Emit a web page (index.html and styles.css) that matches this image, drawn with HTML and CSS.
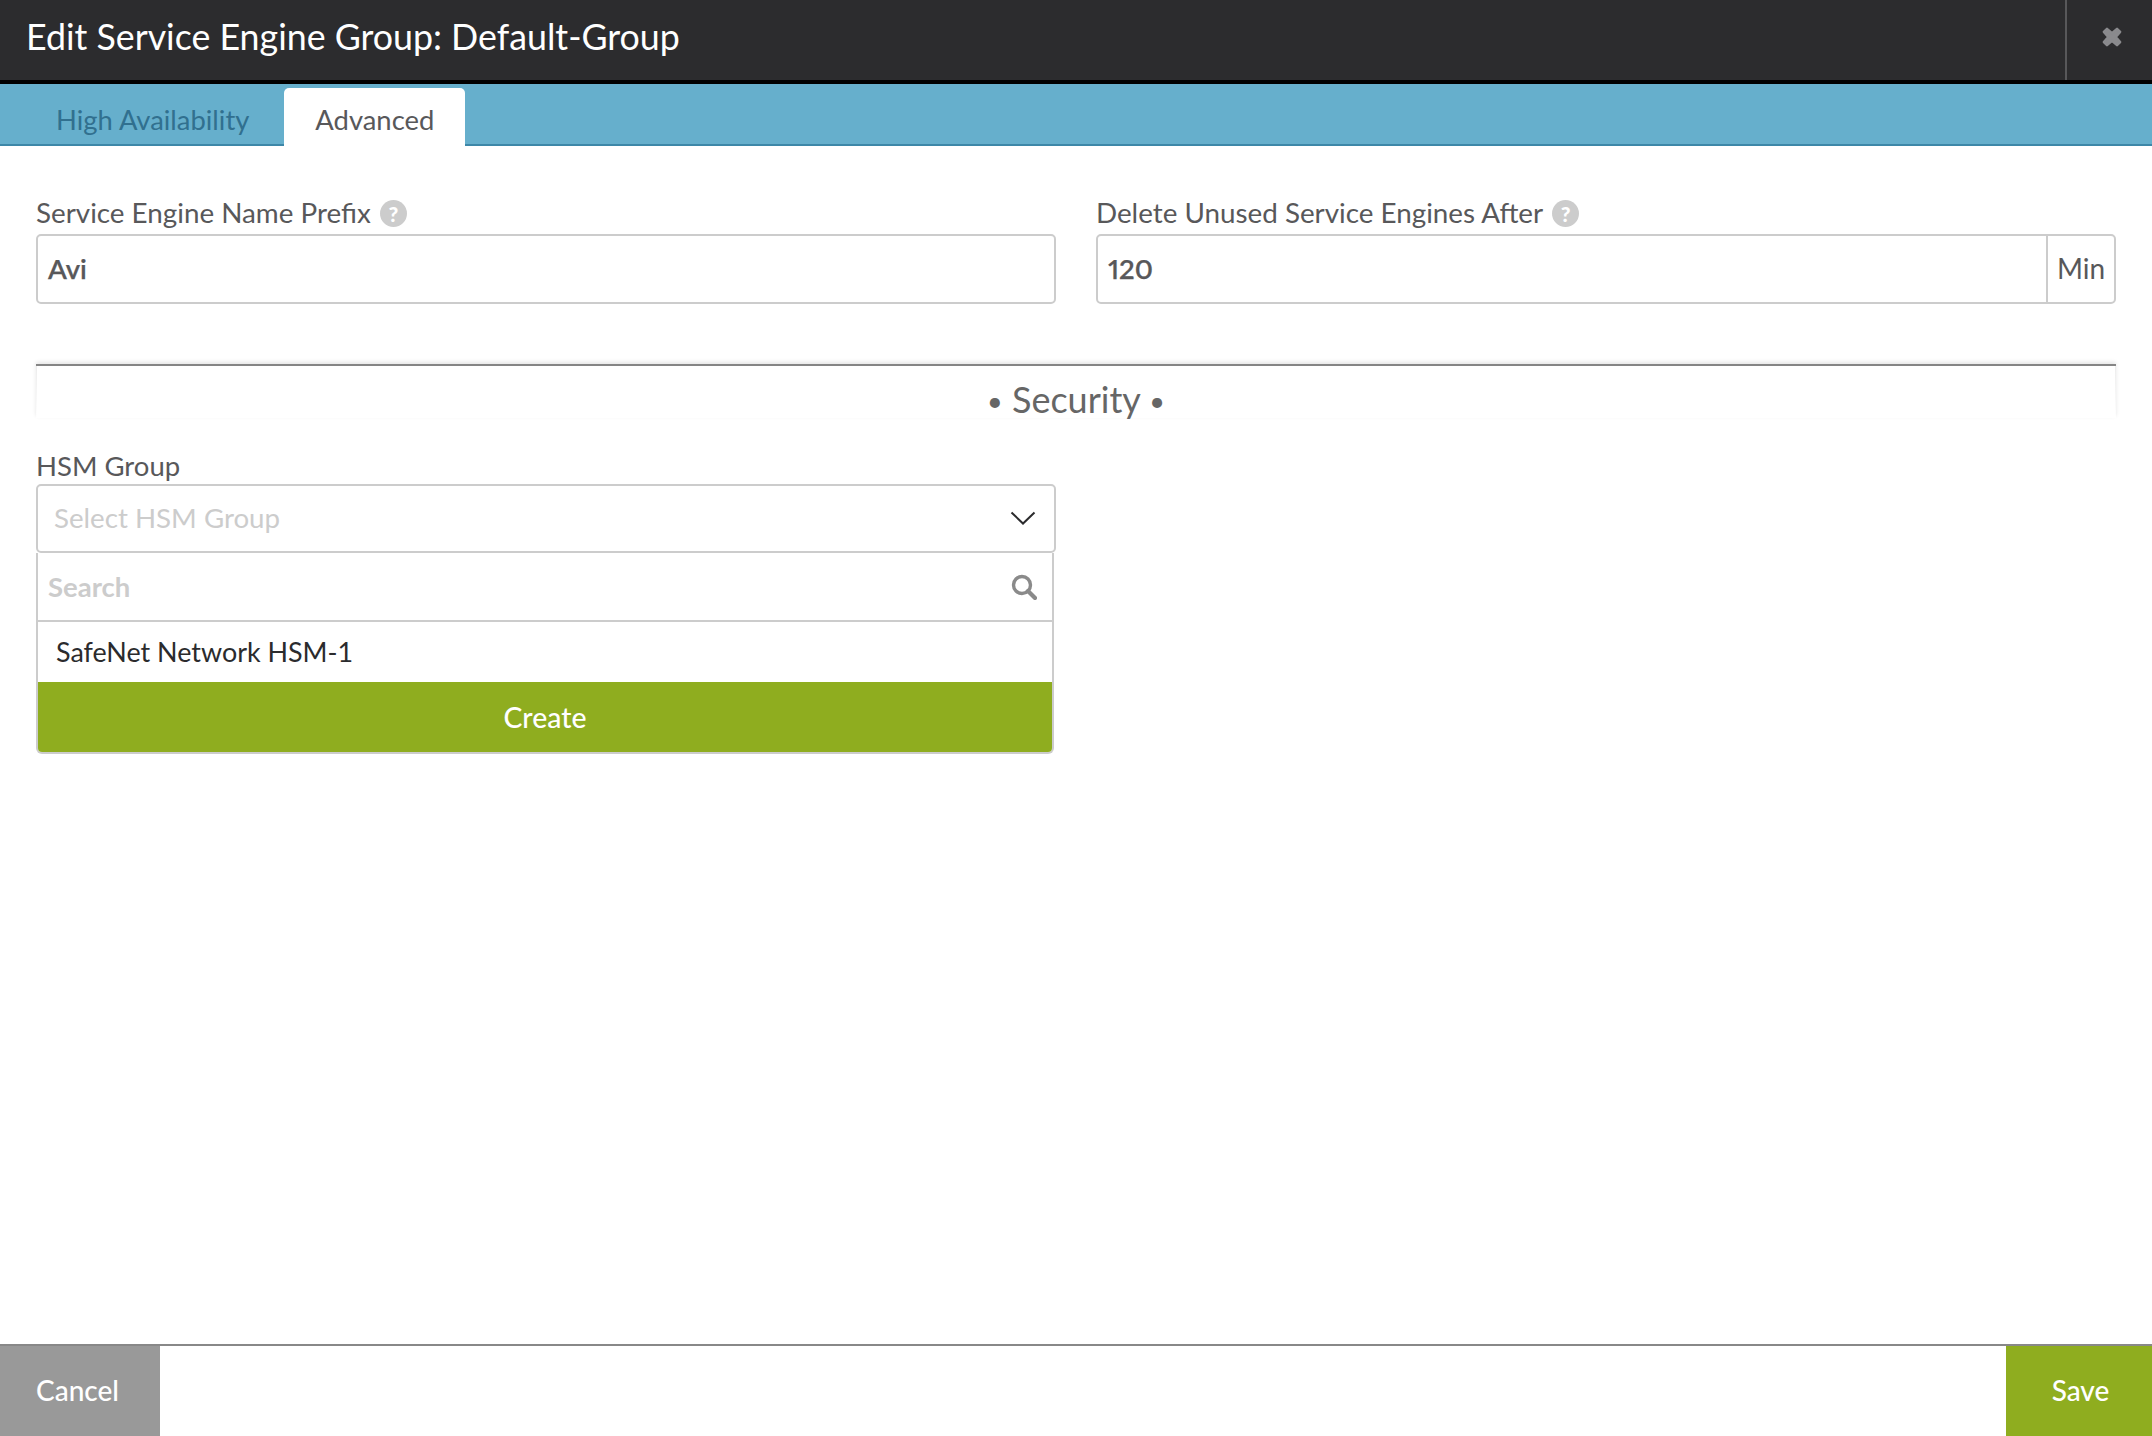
FILE: index.html
```html
<!DOCTYPE html>
<html lang="en">
<head>
<meta charset="utf-8">
<title>Edit Service Engine Group</title>
<link rel="stylesheet" href="styles.css">
</head>
<body>
<div class="modal">
  <header class="header">
    <h1 class="title">Edit Service Engine Group: Default-Group</h1>
    <button class="close" aria-label="Close">
      <svg width="20" height="20" viewBox="2 2 16 16"><path d="M3.5 6 L6 3.5 L10 7 L14 3.5 L16.5 6 L13 10 L16.5 14 L14 16.5 L10 13 L6 16.5 L3.5 14 L7 10 Z" fill="#8a8a8d" stroke="#8a8a8d" stroke-width="2" stroke-linejoin="round"/></svg>
    </button>
  </header>
  <nav class="tabs">
    <a class="tab">High Availability</a>
    <a class="tab tab-active">Advanced</a>
  </nav>
  <main class="content">
    <div class="fields">
      <div class="field">
        <label class="label">Service Engine Name Prefix <span class="help">?</span></label>
        <div class="input"><span class="value">Avi</span></div>
      </div>
      <div class="field">
        <label class="label">Delete Unused Service Engines After <span class="help">?</span></label>
        <div class="input"><span class="value value-grow">120</span><span class="unit">Min</span></div>
      </div>
    </div>
    <section class="section">
      <h2 class="section-title"><span class="dot">•</span> Security <span class="dot">•</span></h2>
    </section>
    <div class="hsm">
      <label class="label label-plain">HSM Group</label>
      <div class="select">
        <span class="placeholder">Select HSM Group</span>
        <svg class="chevron" width="26" height="14" viewBox="0 0 26 14"><path d="M1.5 1.5 L13 12.5 L24.5 1.5" fill="none" stroke="#2b2b2d" stroke-width="2"/></svg>
      </div>
      <div class="panel">
        <div class="search">
          <span class="search-text">Search</span>
          <svg width="26" height="26" viewBox="0 0 26 26"><circle cx="11" cy="11" r="8.5" fill="none" stroke="#8a8a8a" stroke-width="3.4"/><path d="M17 17 L24 24" stroke="#8a8a8a" stroke-width="4.2" stroke-linecap="round"/></svg>
        </div>
        <div class="option">SafeNet Network HSM-1</div>
        <div class="create">Create</div>
      </div>
    </div>
  </main>
  <footer class="footer">
    <button class="btn btn-cancel">Cancel</button>
    <button class="btn btn-save">Save</button>
  </footer>
</div>
</body>
</html>
```
FILE: styles.css
```css
* { box-sizing: border-box; }
html, body { margin: 0; height: 100%; overflow: hidden; }
body { font-family: "Lato", "Open Sans", sans-serif; background: #fff; color: #58585a; }
.modal { display: flex; flex-direction: column; height: 1436px; }

.header { height: 84px; flex: none; background: #2c2c2e; border-bottom: 4px solid #000; display: flex; align-items: center; justify-content: space-between; }
.title { margin: 0 0 6px 26px; font-size: 35.75px; font-weight: 400; color: #fff; line-height: 44px; }
.close { width: 87px; height: 80px; border: 0; border-left: 2px solid #58585a; background: none; padding: 0 0 6px 0; display: flex; align-items: center; justify-content: center; }
.close svg { margin-left: 4px; }

.tabs { height: 62px; flex: none; background: #66afcc; border-bottom: 2px solid #3d87a8; display: flex; align-items: flex-end; padding-left: 25px; gap: 4px; }
.tab { height: 58px; margin-bottom: -2px; padding: 14px 31px 0; font-size: 27.4px; line-height: 36px; color: #31708f; border-radius: 5px 5px 0 0; }
.tab-active { background: #fff; color: #58585a; }

.content { flex: 1; padding: 50px 36px 0; }
.fields { display: grid; grid-template-columns: 1fr 1fr; gap: 40px; }
.label { display: flex; align-items: center; gap: 9px; height: 38px; padding-bottom: 4px; font-size: 27.8px; line-height: 34px; color: #58585a; }
.label-plain { height: 34px; padding-bottom: 2px; font-size: 27.5px; }
.help { width: 27px; height: 27px; border-radius: 50%; background: #ccc; color: #fff; font-size: 21px; font-weight: 900; line-height: 27px; text-align: center; }
.input { height: 70px; border: 2px solid #ccc; border-radius: 5px; display: flex; align-items: center; font-size: 27.5px; font-weight: 600; }
.value { padding: 0 0 2px 10px; font-variant-numeric: proportional-nums; -webkit-text-stroke: .25px #58585a; }
.value-grow { flex: 1; }
.unit { width: 68px; height: 100%; border-left: 2px solid #ccc; display: flex; align-items: center; justify-content: center; padding-bottom: 2px; font-weight: 400; font-size: 28px; }

.section { margin-top: 60px; height: 54px; border-top: 2px solid #858585; box-shadow: 0 -2px 4px rgba(0, 0, 0, .1); background-color: #fff; background-image: linear-gradient(to bottom, #ececec, #fff), linear-gradient(to bottom, #ececec, #fff); background-size: 1px 100%; background-position: left top, right top; background-repeat: no-repeat; }
.section-title { margin: 0; font-size: 36px; font-weight: 400; line-height: 66px; text-align: center; color: #666; }
.dot { font-size: 27px; color: #666; vertical-align: 2px; }

.hsm { width: 1020px; margin-top: 32px; }
.select { height: 69px; border: 2px solid #ccc; border-radius: 5px; display: flex; align-items: center; justify-content: space-between; padding: 0 18px 1px 16px; }
.placeholder { font-size: 27.7px; color: #ccc; padding-bottom: 2px; }
.panel { width: 1018px; border: 2px solid #ccc; border-top: 0; border-radius: 0 0 6px 6px; overflow: hidden; }
.search { height: 69px; border-bottom: 2px solid #ccc; display: flex; align-items: center; justify-content: space-between; padding: 0 15px 0 10px; }
.search-text { font-size: 27.5px; font-weight: 700; color: #ccc; }
.option { height: 60px; padding-left: 18px; font-size: 26.9px; line-height: 60px; color: #2b2b2d; }
.create { height: 70px; background: #8fad1f; color: #fff; font-size: 28.4px; line-height: 71px; text-align: center; font-weight: 500; }

.footer { height: 92px; flex: none; border-top: 2px solid #888; display: flex; justify-content: space-between; }
.btn { border: 0; color: #fff; font-family: inherit; font-size: 28px; font-weight: 500; padding: 0 0 2px; }
.btn-cancel { width: 160px; padding-right: 5px; background: #999; }
.btn-save { width: 146px; padding-left: 3px; background: #8fad1f; }
```
